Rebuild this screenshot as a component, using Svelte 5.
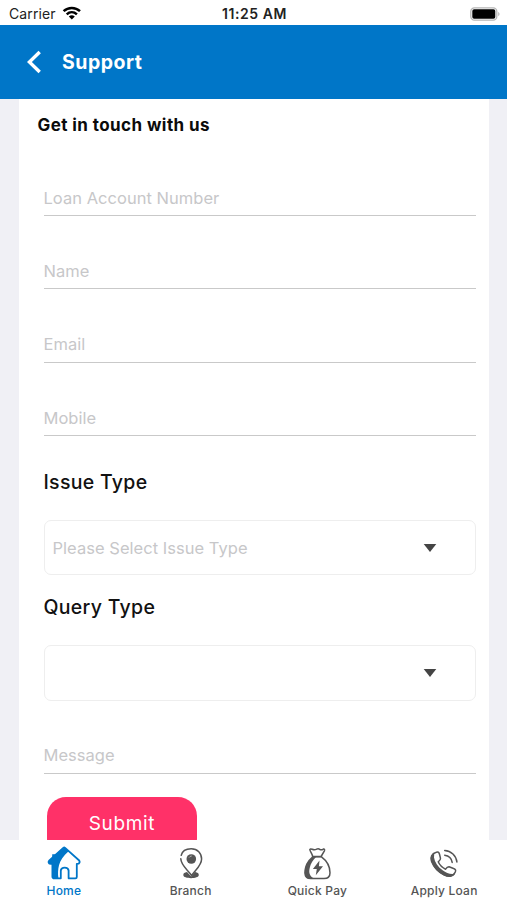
<script>
  const fields = ['Loan Account Number', 'Name', 'Email', 'Mobile'];
  const selects = [
    { label: 'Issue Type', placeholder: 'Please Select Issue Type' },
    { label: 'Query Type', placeholder: '' }
  ];
  const tabs = [
    { id: 'home', label: 'Home' },
    { id: 'branch', label: 'Branch' },
    { id: 'pay', label: 'Quick Pay' },
    { id: 'loan', label: 'Apply Loan' }
  ];
</script>

<div class="screen">
  <div class="status">
    <div class="carrier">
      <span>Carrier</span>
      <svg width="20" height="14" viewBox="0 0 20 14" fill="none" stroke="#000" stroke-width="2.5">
        <path d="M1.6 5.2C6.2 .9 13.4 .9 18 5.2" />
        <path d="M4.7 8.3C7.7 5.5 11.9 5.5 14.9 8.3" />
        <path d="M9.8 13.6 6.8 10.5Q9.8 8.2 12.8 10.5Z" fill="#000" stroke="none" />
      </svg>
    </div>
    <span class="time">11:25 AM</span>
    <svg class="battery" width="30" height="14" viewBox="0 0 30 14">
      <rect x=".8" y=".8" width="26" height="12.4" rx="3.6" fill="#fff" stroke="#b5b5b5" stroke-width="1.3" />
      <rect x="2.3" y="2.3" width="23" height="9.4" rx="1.8" fill="#000" />
      <path d="M28.3 4.7Q30.7 7 28.3 9.3Z" fill="#aaa" />
    </svg>
  </div>

  <header>
    <svg width="14" height="24" viewBox="0 0 14 24" fill="none" stroke="#fff" stroke-width="3.4">
      <path d="M12.7 2 2.4 12 12.7 22" />
    </svg>
    <h1>Support</h1>
  </header>

  <main>
    <div class="card">
      <h2>Get in touch with us</h2>
      <div class="form">
        {#each fields as field}
          <div class="field"><span>{field}</span></div>
        {/each}
        {#each selects as item}
          <h3>{item.label}</h3>
          <div class="select">
            <span>{item.placeholder}</span>
            <svg width="14" height="8" viewBox="0 0 14 8"><path d="M.7 0H13.3L7 8Z" fill="#444" /></svg>
          </div>
        {/each}
        <div class="field message"><span>Message</span></div>
        <div class="submit"><span>Submit</span></div>
      </div>
    </div>
  </main>

  <nav>
    {#each tabs as tab}
      <div class="tab" class:active={tab.id === 'home'}>
        <svg width="36" height="36" viewBox="0 0 36 36" fill="none" stroke="currentColor" stroke-width="1.5" stroke-linecap="round" stroke-linejoin="round">
          {#if tab.id === 'home'}
            <path d="M17.3 2.9Q18.2 2.1 19.1 2.9L33.2 15.5Q34.3 17.2 32.7 18.7L30.8 18.8V32Q30.8 33.3 29.4 33.3H22.6V25.5Q22.2 22.7 18.7 22.7T14.8 25.5V33.3H8.4Q6.4 33.3 6.4 31.4V19L3.4 18.7Q1.8 17.2 3.4 15.4Z" stroke-width="1.8" />
            <path d="M18.3 2.5 3 15.6 3 18.7 6.2 19V33H12.4C11.8 28.5 12 24 13 20.2C14.2 15.5 17.2 11 22.6 6.3Z" fill="currentColor" stroke="none" />
            <path d="M6.2 9.2H9.8V13L6.2 14Z" fill="currentColor" stroke="none" />
          {:else if tab.id === 'branch'}
            <path d="M8.2 10.3C9.2 5.9 13.3 3.7 18.2 3.7C24.6 3.7 28.6 8.3 28.6 14C28.6 20.4 22.7 24.7 18.6 30.5C14.7 24.7 8 20.5 7.8 13.8" />
            <circle cx="18.3" cy="14" r="4.8" fill="currentColor" stroke="none" />
            <path d="M16.3 12.2Q17 11.1 18.3 11" stroke="#b9b9b9" stroke-width="1" />
            <path d="M14 27.1C11.5 27.5 10.3 28.4 10.3 30C10.3 34.2 25.8 34.2 25.8 30C25.8 28.4 24.6 27.5 22.1 27.1L18.2 31.5Z" fill="currentColor" stroke="none" />
          {:else if tab.id === 'pay'}
            <path d="M13.6 11.5C13.4 9 11.3 7 10.8 4.7Q11.1 3.3 13.2 4.3Q15.4 5.4 17.7 4.2Q19.2 3.4 21 4.5Q22.6 5.3 24.3 4.1Q26.1 3.7 25.4 5.8L22.1 11.5Z" />
            <path d="M13.8 11.8C9.7 15.2 6 20.1 6 27.7Q6 33.5 11.8 33.5H25Q31 33.5 31 27.7C31 20.1 27.2 15.3 22.5 11.8Z" />
            <path d="M15.2 11.5C9.2 15.7 5.6 20 5.6 28Q5.8 33.8 12.4 34H16C10.6 31.5 9.5 27.8 10.7 23C11.7 18.8 13.8 15.2 17 12.1Z" fill="currentColor" stroke="none" />
            <path d="M20.5 15.5 13.9 24H17.8L16.8 30.2L24 21.2H19.9Z" fill="currentColor" stroke="none" />
          {:else}
            <path d="M10.3 7.2Q12.8 6.3 13.5 9.2L14.5 13.4Q14.7 15 12.2 16.8C13.6 20 16.2 22.6 19.6 24.2Q21.2 21.6 23 21.7L27.6 23.5Q30.5 24.5 29.3 27C26.8 32.1 22.5 32 18.1 29.8C12.2 27 7.7 22 5.5 16.2C4.1 12.3 5.7 8.6 10.3 7.2Z" />
            <path d="M8.3 7.5C4 10.2 3.9 14.3 6.2 18.7C8.6 23.8 12.7 28 17.8 30.5C22.5 32.7 27.8 32.3 29.2 28.6C24.8 29.6 20.5 28.3 16.6 25.3C11.6 21.5 8.8 17.5 8 12.5Z" fill="currentColor" stroke="none" />
            <path d="M18.7 5.5C25.1 5.8 30.2 10.8 30.9 17M18.7 10.2C22.5 10.7 25.6 13.4 26.2 17.4" />
          {/if}
        </svg>
        <span>{tab.label}</span>
      </div>
    {/each}
  </nav>
</div>

<style>
  .screen {
    display: flex;
    flex-direction: column;
    width: 507px;
    height: 900px;
    overflow: hidden;
    background: #fff;
    font-family: Inter, "Liberation Sans", sans-serif;
  }
  .status {
    display: grid;
    grid-template-columns: 1fr auto 1fr;
    align-items: center;
    height: 25px;
    padding: 2px 7px 0 9px;
    box-sizing: border-box;
    font-size: 14px;
    color: #222;
  }
  .carrier {
    display: flex;
    align-items: center;
    gap: 6px;
  }
  .carrier span { letter-spacing: 0.1px; }
  .carrier svg { position: relative; top: -1px; }
  .time {
    font-weight: 600;
    letter-spacing: 0.55px;
    font-size: 14px;
  }
  .battery { justify-self: end; }
  header {
    display: flex;
    align-items: center;
    gap: 21px;
    height: 73.5px;
    padding-left: 27px;
    box-sizing: border-box;
    flex: none;
    background: #0076c8;
    color: #fff;
  }
  h1, h2, h3 { margin: 0; }
  h1 {
    font-size: 19.5px;
    font-weight: 700;
    letter-spacing: 0.5px;
  }
  main {
    flex: 1;
    min-height: 0;
    overflow: hidden;
    padding: 0 18px 0 18.5px;
    background: #f0f0f5;
  }
  .card {
    height: 100%;
    background: #fff;
  }
  h2 {
    padding: 15px 0 1px 19px;
    font-size: 17px;
    line-height: 22px;
    font-weight: 700;
    letter-spacing: 0.42px;
    color: #0b0b0b;
  }
  .form { padding: 6.4px 13px 0 25px; }
  .field {
    display: flex;
    align-items: flex-end;
    height: 73.3px;
    padding-bottom: 7.5px;
    box-sizing: border-box;
    border-bottom: 1.5px solid #c9c9c9;
    font-size: 16.5px;
    line-height: 20px;
    letter-spacing: 0.03px;
    color: #c7c7c9;
  }
  h3 {
    height: 83.8px;
    padding-top: 33px;
    box-sizing: border-box;
    font-size: 19.5px;
    line-height: 26px;
    font-weight: 500;
    letter-spacing: 0.3px;
    color: #111;
  }
  .select + h3 { height: 70px; padding-top: 18.5px; }
  .select {
    display: flex;
    align-items: center;
    justify-content: space-between;
    height: 55.5px;
    padding: 0 38px 0 8px;
    box-sizing: border-box;
    border: 1.5px solid #eee;
    border-radius: 7px;
    font-size: 16.5px;
    letter-spacing: 0.03px;
    color: #c7c7c9;
  }
  .message { padding-bottom: 8px; }
  .submit {
    display: flex;
    justify-content: center;
    width: 150px;
    height: 60px;
    margin: 22.7px 0 0 3.5px;
    padding-top: 14.5px;
    box-sizing: border-box;
    border-radius: 19px;
    background: #ff3168;
    color: #fff;
    font-size: 19px;
    line-height: 26px;
    letter-spacing: 0.65px;
  }
  nav {
    display: flex;
    flex: none;
    height: 60px;
    background: #fff;
  }
  .tab {
    display: flex;
    flex: 1;
    flex-direction: column;
    align-items: center;
    padding: 5px 0 0 1px;
    color: #555;
    font-size: 12px;
    font-weight: 500;
    line-height: 16px;
    letter-spacing: 0.22px;
  }
  .tab.active { color: #0076c8; }
  .tab span { margin-top: 2px; }
</style>
